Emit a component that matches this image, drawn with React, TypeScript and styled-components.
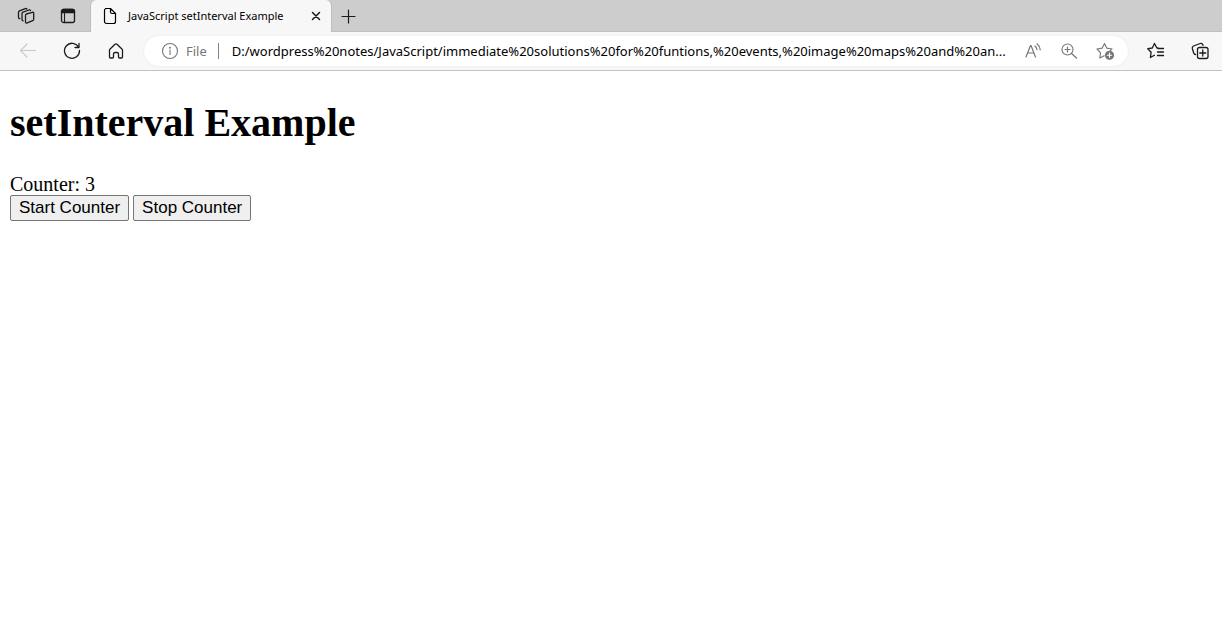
import React, { useEffect, useRef, useState } from "react";
import styled, { createGlobalStyle } from "styled-components";

const GlobalStyle = createGlobalStyle`
  *, *::before, *::after { box-sizing: border-box; }
  body { margin: 0; background: #fff; color: #000; }
`;

const uiFont = `"Segoe UI", "Noto Sans", "Open Sans", sans-serif`;

const Chrome = styled.header`
  font-family: ${uiFont};
`;

const TabStrip = styled.div`
  display: flex;
  align-items: stretch;
  height: 32px;
  padding-left: 5px;
  background: #cdcdcd;
  box-shadow: inset 0 -1px 0 #c0c0c0;
`;

const IconButton = styled.button<{ $width: number; $color?: string }>`
  display: flex;
  flex: none;
  align-items: center;
  justify-content: center;
  width: ${(p) => p.$width}px;
  padding: 0;
  border: 0;
  background: none;
  color: ${(p) => p.$color ?? "#1b1b1b"};
`;

const Tab = styled.div`
  display: flex;
  align-items: center;
  width: 242px;
  margin-left: 1px;
  padding: 0 3px 0 10px;
  border-left: 1px solid #bdbdbd;
  border-right: 1px solid #bdbdbd;
  border-radius: 6px 6px 0 0;
  background: #f7f7f7;
`;

const TabTitle = styled.span`
  flex: 1;
  margin-left: 9px;
  font-size: 11px;
  line-height: 16px;
  white-space: nowrap;
`;

const Toolbar = styled.div`
  display: flex;
  align-items: stretch;
  height: 39px;
  padding: 4px 0 4px 6px;
  border-bottom: 1px solid #c2c2c2;
  background: #f7f7f7;
`;

const AddressBar = styled.div`
  display: flex;
  flex: 1;
  align-items: stretch;
  min-width: 0;
  margin: 0 6px;
  padding: 0 5px 0 17px;
  border-radius: 15px;
  background: #fff;
  box-shadow: 0 0 3px #e8e8e8;
`;

const SiteInfo = styled.label`
  display: flex;
  flex: none;
  align-items: center;
  gap: 7px;
  color: #767676;
  font-size: 13px;
  line-height: 18px;
`;

const Divider = styled.span`
  width: 1px;
  height: 16px;
  margin: 0 13px 0 4px;
  background: #858585;
`;

const UrlInput = styled.input`
  flex: 1;
  min-width: 0;
  padding: 0;
  border: 0;
  outline: 0;
  background: none;
  color: #000;
  font-family: ${uiFont};
  font-size: 13px;
`;

const Page = styled.main`
  padding: 27px 10px;
  font-family: "Times New Roman", "Liberation Serif", serif;
  font-size: 20px;
`;

const Heading = styled.h1`
  margin: 0 0 25px;
  font-size: 40px;
  line-height: 50px;
`;

const Counter = styled.div`
  line-height: 22px;
`;

const ButtonRow = styled.div`
  display: flex;
  gap: 4px;
`;

const CounterButton = styled.button`
  height: 26px;
  padding: 0 8px;
  border: 1px solid #767676;
  border-radius: 2px;
  background: #efefef;
  color: #000;
  font-family: Arial, "Liberation Sans", sans-serif;
  font-size: 17px;
  line-height: 22px;
`;

const Icon = ({ size = 18, children }: { size?: number; children: React.ReactNode }) => (
  <svg
    width={size}
    height={size}
    viewBox={`0 0 ${size} ${size}`}
    fill="none"
    stroke="currentColor"
    strokeWidth="1.1"
    strokeLinecap="round"
    strokeLinejoin="round"
    aria-hidden="true"
  >
    {children}
  </svg>
);

const WorkspacesIcon = () => (
  <Icon>
    <path d="M9.3 7 15.300 5.300Q16.700 5 16.700 6.300v5.900q0 1-1 1.400l-5.500 2.300Q8.600 16.500 8.500 15V8.200Q8.500 7.300 9.300 7Z" strokeWidth="1.300" />
    <path d="M6.200 13.800Q5 13.800 5 12.500V6.600Q5 5.600 6 5.200L12 3Q13.100 2.700 13.500 3.500" strokeWidth="1.300" />
    <path d="M2.800 11.700Q1.500 11.700 1.500 10.400V5.300Q1.500 4.200 2.500 3.800L8.300 1.600Q9.400 1.300 9.900 2" strokeWidth="1.300" />
  </Icon>
);

const TabActionsIcon = () => (
  <Icon>
    <rect x="2.500" y="2.500" width="13" height="13" rx="2" strokeWidth="1.300" />
    <path d="M2.500 5.500V4.500a2 2 0 0 1 2-2h9a2 2 0 0 1 2 2V5.500Z" fill="currentColor" strokeWidth="1.300" />
    <path d="M5.500 6v9.500" />
  </Icon>
);

const PageIcon = () => (
  <Icon>
    <path d="M4.500 1.500h5l5 5v8a2 2 0 0 1-2 2h-7a2 2 0 0 1-2-2v-11a2 2 0 0 1 2-2M9.500 1.500v3.500a1.500 1.500 0 0 0 1.500 1.500h3.500" strokeWidth="1.200" />
  </Icon>
);

const CloseIcon = () => (
  <Icon size={10}>
    <path d="m1.500 1.500 7 7m0-7-7 7" strokeWidth="1.500" />
  </Icon>
);

const PlusIcon = () => (
  <Icon size={15}>
    <path d="M7.500 1v13M1 7.500h13" strokeWidth="1.200" />
  </Icon>
);

const BackIcon = () => (
  <Icon>
    <path d="M16.500 8.500h-15M8 2 1.500 8.500 8 15" />
  </Icon>
);

const RefreshIcon = () => (
  <Icon>
    <path d="M16.500 8.500A7.500 7.500 0 1 1 15.500 5M16 1.500V5.500H12" strokeWidth="1.300" />
  </Icon>
);

const HomeIcon = () => (
  <Icon>
    <path d="M2.500 8.300q0-.8.600-1.300L8 2.300q1-.9 2 0L14.900 7q.6.500.6 1.300v6.700q0 1-1 1h-2q-1 0-1-1v-3q0-1.500-1.500-1.500H8q-1.500 0-1.500 1.500v3q0 1-1 1h-2q-1 0-1-1Z" strokeWidth="1.300" />
  </Icon>
);

const InfoIcon = () => (
  <Icon>
    <circle cx="9" cy="9" r="7.500" />
    <path d="M9 8v4.500" />
    <circle cx="9" cy="5.700" r=".4" fill="currentColor" />
  </Icon>
);

const ReadAloudIcon = () => (
  <Icon>
    <path d="M2 15 6.500 3.500h.5L11.500 15M3.600 11h6.300M11 4q1.700 1.300 2 3.700M13 1.800q2.800 2.200 3.200 6" strokeWidth="1.200" />
  </Icon>
);

const ZoomIcon = () => (
  <Icon>
    <circle cx="7.500" cy="7.500" r="5.500" />
    <path d="m11.500 11.500 5 4.500M7.500 5v5M5 7.500h5" strokeWidth="1.200" />
  </Icon>
);

const AddFavoriteIcon = () => (
  <Icon>
    <path d="M8.200 13.700 3.800 16l.8-5.200L1 7l5.200-.9L8.500 1.500l2.200 4.600 5.300.9-1.800 1.700" />
    <circle cx="13.500" cy="13.200" r="4" fill="currentColor" />
    <path d="M13.500 11v4.400M11.300 13.200h4.400" stroke="#fff" />
  </Icon>
);

const FavoritesIcon = () => (
  <Icon>
    <path d="M11 6H9.900L7.500 1.500 5.300 6l-4.500.7 3.300 3.500L3.400 15.500l4-2.200M11 6.500h5.500M10.500 10h6M10.500 13.500h6" strokeWidth="1.300" />
  </Icon>
);

const CollectionsIcon = () => (
  <Icon>
    <rect x="6.500" y="5.500" width="10.500" height="11" rx="2" strokeWidth="1.300" />
    <path d="M11.750 8v6M8.750 11h6M4.500 12.500q-1.200-.2-1.700-1.300L1.300 6.500Q.9 4.800 2.500 4l6.700-2.500q1.600-.5 2.500 1l.3.800" strokeWidth="1.300" />
  </Icon>
);

export default function App() {
  const [count, setCount] = useState(3);
  const timer = useRef<number | undefined>(undefined);

  const stop = () => {
    window.clearInterval(timer.current);
    timer.current = undefined;
  };
  const start = () => {
    if (timer.current === undefined) {
      timer.current = window.setInterval(() => setCount((c) => c + 1), 1000);
    }
  };
  useEffect(() => stop, []);

  return (
    <>
      <GlobalStyle />
      <Chrome>
        <TabStrip>
          <IconButton $width={42} aria-label="Workspaces"><WorkspacesIcon /></IconButton>
          <IconButton $width={42} aria-label="Tab actions"><TabActionsIcon /></IconButton>
          <Tab>
            <PageIcon />
            <TabTitle>JavaScript setInterval Example</TabTitle>
            <IconButton $width={24} aria-label="Close tab"><CloseIcon /></IconButton>
          </Tab>
          <IconButton $width={32} aria-label="New tab"><PlusIcon /></IconButton>
        </TabStrip>
        <Toolbar>
          <IconButton $width={44} $color="#c9c9c4" aria-label="Back"><BackIcon /></IconButton>
          <IconButton $width={44} aria-label="Refresh"><RefreshIcon /></IconButton>
          <IconButton $width={44} aria-label="Home"><HomeIcon /></IconButton>
          <AddressBar>
            <SiteInfo htmlFor="url">
              <InfoIcon />
              File
              <Divider />
            </SiteInfo>
            <UrlInput
              id="url"
              type="text"
              readOnly
              value="D:/wordpress%20notes/JavaScript/immediate%20solutions%20for%20funtions,%20events,%20image%20maps%20and%20an..."
            />
            <IconButton $width={36} $color="#767676" aria-label="Read aloud"><ReadAloudIcon /></IconButton>
            <IconButton $width={36} $color="#767676" aria-label="Zoom"><ZoomIcon /></IconButton>
            <IconButton $width={36} $color="#767676" aria-label="Add to favorites"><AddFavoriteIcon /></IconButton>
          </AddressBar>
          <IconButton $width={44} aria-label="Favorites"><FavoritesIcon /></IconButton>
          <IconButton $width={44} aria-label="Collections"><CollectionsIcon /></IconButton>
        </Toolbar>
      </Chrome>
      <Page>
        <Heading>setInterval Example</Heading>
        <Counter>Counter: {count}</Counter>
        <ButtonRow>
          <CounterButton type="button" onClick={start}>Start Counter</CounterButton>
          <CounterButton type="button" onClick={stop}>Stop Counter</CounterButton>
        </ButtonRow>
      </Page>
    </>
  );
}
